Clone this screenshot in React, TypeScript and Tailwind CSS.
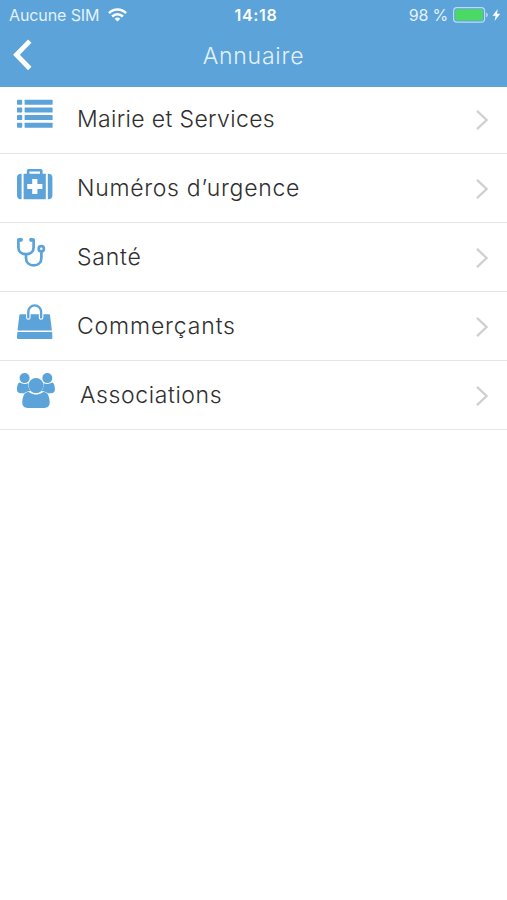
import type { ReactNode } from 'react';
import clsx from 'clsx';

type Entry = {
  name: string;
  tracking: string;
  icon: ReactNode;
};

function ListIcon() {
  return (
    <svg className="w-9 h-9 shrink-0" viewBox="0 0 36 36" fill="currentColor">
      {[2.7, 10.4, 18.1, 25.8].map((y) => (
        <g key={y}>
          <rect x="0" y={y} width="5.2" height="5" rx="0.7" />
          <rect x="7.6" y={y} width="28" height="5" rx="0.5" />
        </g>
      ))}
    </svg>
  );
}

function MedkitIcon() {
  return (
    <svg className="w-9 h-9 shrink-0" viewBox="0 0 36 36" fill="currentColor">
      <path d="M4.6 7.8V33.2H4A4 4 0 0 1 0 29.2V11.8A4 4 0 0 1 4 7.8Z" />
      <path d="M30.8 7.8V33.2H31.4A4 4 0 0 0 35.4 29.2V11.8A4 4 0 0 0 31.4 7.8Z" />
      <path
        fillRule="evenodd"
        d="M6.6 7.8H9.8V4.8A1.9 1.9 0 0 1 11.7 2.9H23.7A1.9 1.9 0 0 1 25.6 4.8V7.8H28.8V33.2H6.6ZM12.4 7.8H23V5.4H12.4ZM15.2 13V17.9H10.2V23H15.2V28H20.4V23H25.4V17.9H20.4V13Z"
      />
    </svg>
  );
}

function StethoscopeIcon() {
  return (
    <svg className="w-9 h-9 shrink-0" viewBox="0 0 36 36" fill="none" stroke="currentColor" strokeWidth="2.7">
      <path d="M3.5 4.6H1.4V12.5C1.4 16.5 4.3 19.2 9 19.2S16.6 16.5 16.6 12.5V4.6H14.5" strokeLinejoin="round" />
      <path d="M9 19.4V23C9 27.5 12.2 30.4 16.7 30.4S24.4 27.5 24.4 23V16.8" />
      <circle cx="24.3" cy="13.8" r="2.6" />
      <circle cx="3.8" cy="4.8" r="2.1" fill="currentColor" stroke="none" />
      <circle cx="14.2" cy="4.8" r="2.1" fill="currentColor" stroke="none" />
    </svg>
  );
}

function BagIcon() {
  return (
    <svg className="w-9 h-9 shrink-0" viewBox="0 0 36 36">
      <path
        fill="currentColor"
        d="M3.5 10.2H31.9A1.1 1.1 0 0 1 33 11.1L34.9 26.4H.5L2.4 11.1A1.1 1.1 0 0 1 3.5 10.2ZM.3 27.9H35.1L35.4 33.7A1.2 1.2 0 0 1 34.2 35H1.2A1.2 1.2 0 0 1 0 33.7Z"
      />
      <g fill="none" strokeLinecap="round">
        <path d="M11.3 13.4V9M24.1 9V13.4" stroke="white" strokeWidth="4.6" />
        <path d="M11.3 13.4V7.8A6.4 6.4 0 0 1 24.1 7.8V13.4" stroke="currentColor" strokeWidth="2.4" />
      </g>
    </svg>
  );
}

function UsersIcon() {
  return (
    <svg className="w-[39px] h-9 shrink-0" viewBox="0 0 39 36" fill="currentColor">
      <circle cx="7.6" cy="5.1" r="5" />
      <circle cx="30.3" cy="5.1" r="5" />
      <path d="M2.8 9.6C4.2 10.4 5.8 11 7.6 11C9.1 11 10.2 10.7 11.2 10.3C10.9 13.8 12 16.4 13.5 17.9C10.9 18 8.8 18.7 7.2 20.2H3.8C1.5 20.2 0 19 0 16.8C0 13.6.7 9.6 2.8 9.6Z" />
      <path d="M35.1 9.6C33.7 10.4 32.1 11 30.3 11C28.8 11 27.7 10.7 26.7 10.3C27 13.8 25.9 16.4 24.4 17.9C27 18 29.1 18.7 30.7 20.2H34.1C36.4 20.2 37.9 19 37.9 16.8C37.9 13.6 37.2 9.6 35.1 9.6Z" />
      <circle cx="19" cy="12.6" r="7.5" />
      <path d="M11.1 19.1C12.5 19.1 14.6 21.6 19 21.6S25.5 19.1 26.9 19.1C31 19.1 32.7 24.9 32.7 29.8C32.7 33.1 30.5 35 27.3 35H10.7C7.5 35 5.3 33.1 5.3 29.8C5.3 24.9 7 19.1 11.1 19.1Z" />
    </svg>
  );
}

const entries: Entry[] = [
  { name: 'Mairie et Services', tracking: 'tracking-[0.35px]', icon: <ListIcon /> },
  { name: 'Numéros d’urgence', tracking: 'tracking-[0.7px]', icon: <MedkitIcon /> },
  { name: 'Santé', tracking: 'tracking-[0.8px]', icon: <StethoscopeIcon /> },
  { name: 'Commerçants', tracking: 'tracking-[0.85px]', icon: <BagIcon /> },
  { name: 'Associations', tracking: 'tracking-[0.6px]', icon: <UsersIcon /> },
];

function StatusBar() {
  return (
    <div className="grid grid-cols-3 items-center h-[30px] pl-[9px] pr-[6px] text-base">
      <div className="flex items-center gap-[9px] text-[#e4f1fb]">
        <span className="tracking-[-0.1px] whitespace-nowrap">Aucune SIM</span>
        <svg className="w-[19px] h-[14px] shrink-0" viewBox="0 0 19 14" fill="none" stroke="white" strokeWidth="2.6">
          <path d="M1 5.2C5.8 .3 13.2 .3 18 5.2" />
          <path d="M4.1 8.5C7.2 5.5 11.8 5.5 14.9 8.5" />
          <path d="M9.5 13.6L6.6 10.7C8.2 9.2 10.8 9.2 12.4 10.7Z" fill="white" stroke="none" />
        </svg>
      </div>
      <span className="text-center font-semibold tracking-[0.7px] pl-0.5">14:18</span>
      <div className="flex items-center justify-end text-[#e4f1fb]">
        <span className="mr-[5px] tracking-[-0.2px] whitespace-nowrap">98 %</span>
        <svg className="w-9 h-4 shrink-0" viewBox="0 0 36 16">
          <rect x="0.6" y="0.6" width="31" height="14.6" rx="3.4" fill="none" stroke="#b9dcf5" strokeWidth="1.2" />
          <rect x="2.2" y="2.2" width="27.8" height="11.4" rx="1.8" fill="#4bd964" />
          <path d="M33.2 5.5C35.4 6.2 35.4 9.6 33.2 10.3Z" fill="#b9dcf5" />
        </svg>
        <svg className="w-[9px] h-3 ml-[3px] shrink-0" viewBox="0 0 9 12" fill="white">
          <path d="M5.8 0L.5 6.7H3.7L2.5 12L8.3 4.8H5Z" />
        </svg>
      </div>
    </div>
  );
}

export default function App() {
  return (
    <div className="min-h-[900px] bg-white font-['Inter','Liberation_Sans',sans-serif]">
      <header className="relative z-10 h-[87px] bg-[#5ba3d9] text-white">
        <StatusBar />
        <div className="grid grid-cols-[40px_1fr_40px] items-center h-[52px]">
          <button aria-label="Retour" className="pl-[13px] pb-[3px]">
            <svg className="w-5 h-8" viewBox="0 0 20 32" fill="none" stroke="currentColor" strokeWidth="4.8">
              <path d="M16.8 2.1L3.4 15.8L16.8 29.5" />
            </svg>
          </button>
          <h1 className="text-center text-[23px] font-light tracking-[0.8px] text-[#e4f1fb]">Annuaire</h1>
        </div>
      </header>
      <ul className="-mt-0.5">
        {entries.map((entry) => (
          <li
            key={entry.name}
            className="flex items-center h-[69px] pl-[17px] pr-[18px] border-b border-[#e4e4e4]"
          >
            <span className="-mt-2 text-[#5ba3d9]">{entry.icon}</span>
            <span className={clsx('ml-6 flex-1 text-[23px] font-light text-[#2f2f2f]', entry.tracking)}>
              {entry.name}
            </span>
            <svg className="w-[14px] h-[22px] mt-px shrink-0" viewBox="0 0 14 22" fill="none" stroke="#d0d0d2" strokeWidth="2.3">
              <path d="M2 1.8L11.6 11L2 20.2" />
            </svg>
          </li>
        ))}
      </ul>
    </div>
  );
}
